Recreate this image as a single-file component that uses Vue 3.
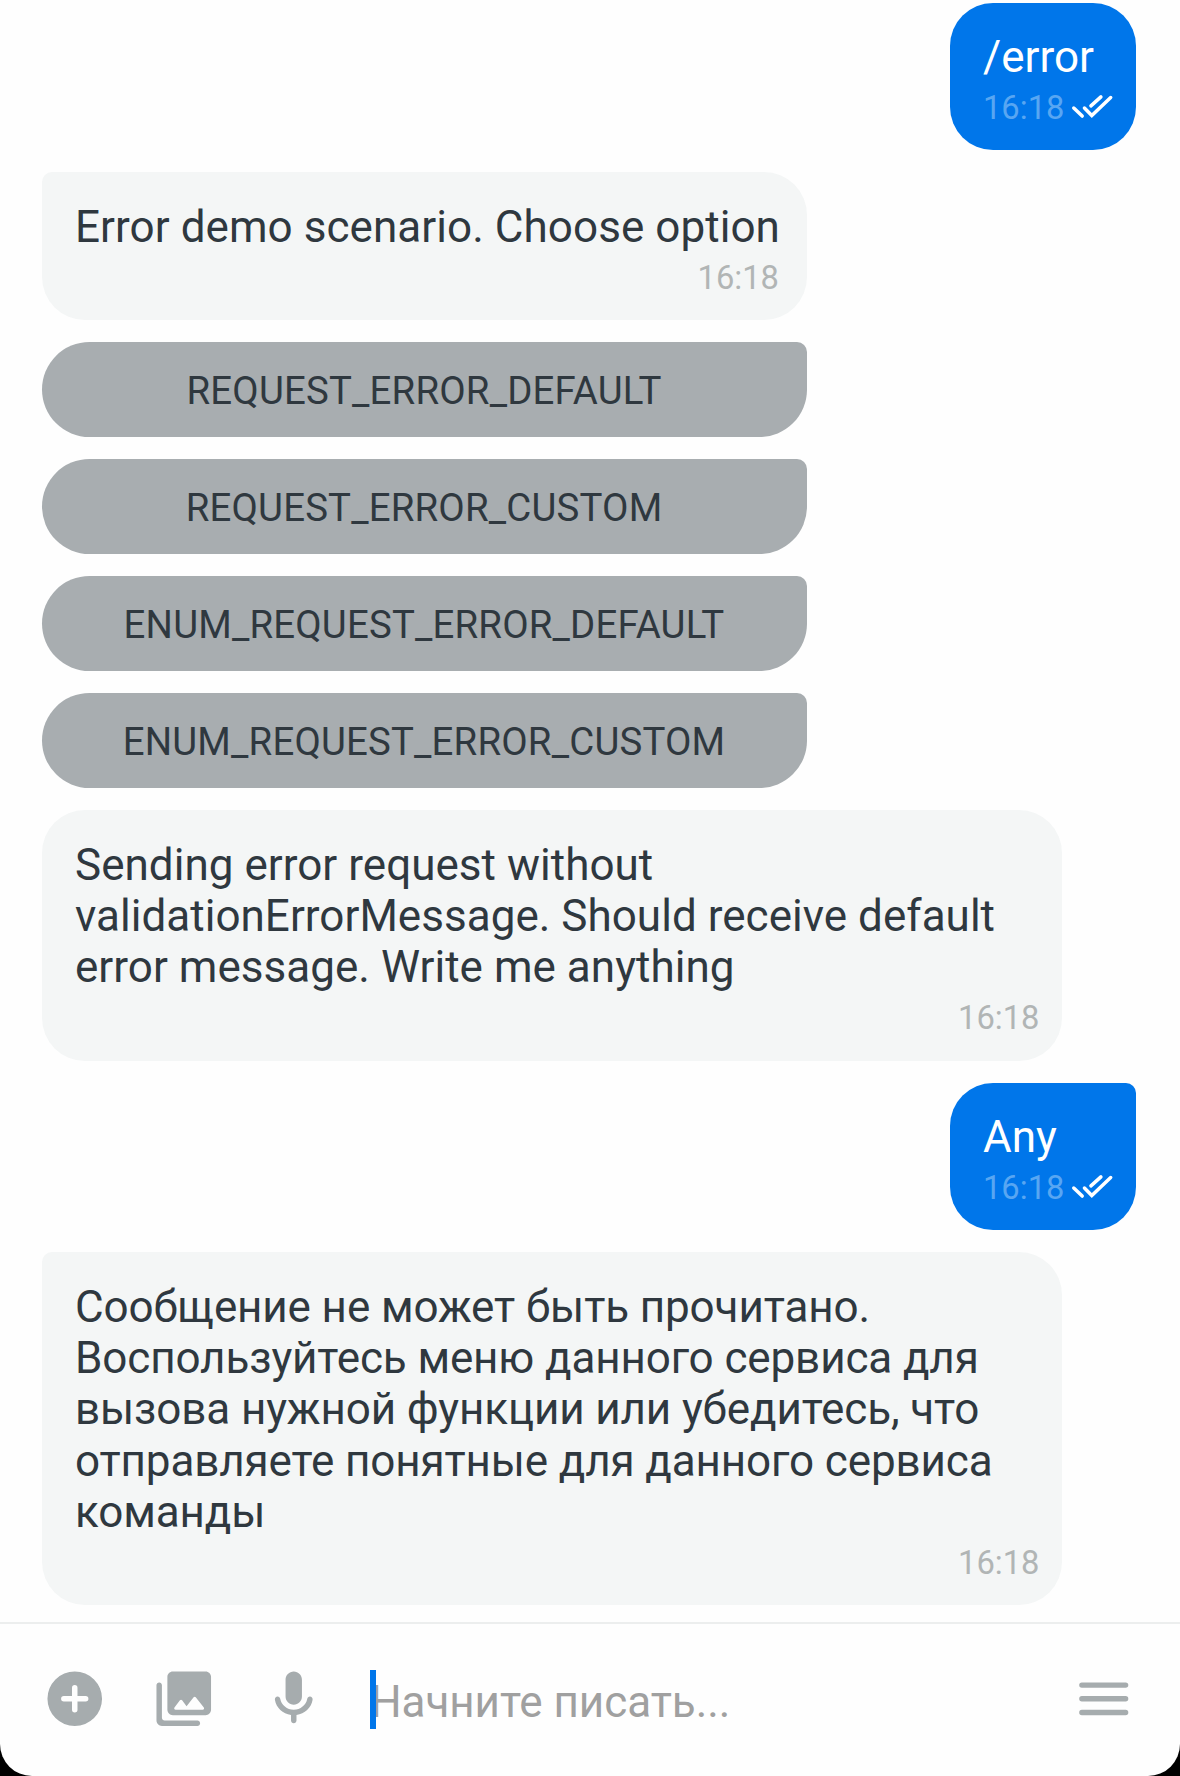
<script setup>
const items = [
  { kind: 'out', lines: ['/error'], shape: 'first' },
  { kind: 'in', lines: ['Error demo scenario. Choose option'], shape: 'fit tail' },
  { kind: 'button', label: 'REQUEST_ERROR_DEFAULT' },
  { kind: 'button', label: 'REQUEST_ERROR_CUSTOM' },
  { kind: 'button', label: 'ENUM_REQUEST_ERROR_DEFAULT' },
  { kind: 'button', label: 'ENUM_REQUEST_ERROR_CUSTOM' },
  {
    kind: 'in',
    lines: [
      'Sending error request without',
      'validationErrorMessage. Should receive default',
      'error message. Write me anything',
    ],
    shape: 'wide',
  },
  { kind: 'out', lines: ['Any'] },
  {
    kind: 'in',
    lines: [
      'Сообщение не может быть прочитано.',
      'Воспользуйтесь меню данного сервиса для',
      'вызова нужной функции или убедитесь, что',
      'отправляете понятные для данного сервиса',
      'команды',
    ],
    shape: 'wide tail cyrillic',
  },
]
const time = '16:18'
</script>

<template>
  <div class="screen">
    <div class="phone">
      <main class="feed">
        <template v-for="(item, i) in items" :key="i">
          <button v-if="item.kind === 'button'" class="option">{{ item.label }}</button>
          <div v-else class="bubble" :class="[item.kind, item.shape]">
            <p v-for="line in item.lines" :key="line" class="line">{{ line }}</p>
            <div class="meta">
              <span class="time">{{ time }}</span>
              <svg v-if="item.kind === 'out'" class="checks" viewBox="0 0 45 27">
                <path d="M3.9 15.1 12.6 23.4M14.9 15.1l7.6 7.7L42 4.2M21.6 12.9 31.9 3.6" />
              </svg>
            </div>
          </div>
        </template>
      </main>

      <footer class="composer">
        <svg class="icon" viewBox="0 0 24 24">
          <path d="M12 2a10 10 0 1 0 0 20 10 10 0 0 0 0-20zm4 11h-3v3a1 1 0 0 1-2 0v-3H8a1 1 0 0 1 0-2h3V8a1 1 0 0 1 2 0v3h3a1 1 0 0 1 0 2z" />
        </svg>
        <svg class="icon" viewBox="0 0 24 24">
          <path d="M22 16V4c0-1.100-.9-2-2-2H8c-1.100 0-2 .9-2 2v12c0 1.100.9 2 2 2h12c1.100 0 2-.9 2-2zm-10.600-3.470 1.630 2.180 2.580-3.220c.2-.25.58-.25.78 0l2.960 3.700c.26.33.03.81-.39.81H9c-.41 0-.65-.47-.4-.8l2-2.670c.2-.26.6-.26.8 0zM2 7v13c0 1.100.9 2 2 2h13c.55 0 1-.45 1-1s-.45-1-1-1H5c-.55 0-1-.45-1-1V7c0-.55-.45-1-1-1s-1 .45-1 1z" />
        </svg>
        <svg class="icon" viewBox="0 0 24 24">
          <path d="M12 14.200c1.660 0 3-1.340 3-3V5c0-1.660-1.340-3-3-3S9 3.340 9 5v6.200c0 1.660 1.340 3 3 3zm5.910-3c-.49 0-.9.360-.98.850C16.520 14.200 14.470 16 12 16s-4.520-1.800-4.930-3.950c-.08-.49-.49-.85-.98-.85-.61 0-1.090.54-1 1.140.49 3 2.890 5.160 5.910 5.600V20c0 .55.45 1 1 1s1-.45 1-1v-2.060c3.020-.44 5.420-2.600 5.910-5.600.1-.6-.39-1.140-1-1.140z" />
        </svg>
        <div class="field">
          <span class="placeholder">Начните писать...</span>
          <i class="caret"></i>
        </div>
        <svg class="icon" viewBox="0 0 24 24">
          <path d="M4 18h16a1 1 0 0 0 0-2H4a1 1 0 0 0 0 2zm0-5h16a1 1 0 0 0 0-2H4a1 1 0 0 0 0 2zM3 7a1 1 0 0 0 1 1h16a1 1 0 0 0 0-2H4a1 1 0 0 0-1 1z" />
        </svg>
      </footer>
    </div>
  </div>
</template>

<style>
body {
  margin: 0;
  background: #000;
}
</style>

<style scoped>
.screen {
  width: 1180px;
  height: 1776px;
  overflow: hidden;
  background: #000;
  font-family: Roboto, "Noto Sans", sans-serif;
}
.phone {
  display: flex;
  flex-direction: column;
  height: 1776px;
  background: #fefefe;
  border-radius: 0 0 32px 32px;
  overflow: hidden;
}
.feed {
  box-sizing: border-box;
  height: 1621.500px;
  flex: none;
  display: flex;
  flex-direction: column;
  align-items: flex-start;
  gap: 22px;
  padding: 2.700px 44px 0 42px;
}
.bubble {
  box-sizing: border-box;
  flex: none;
  border-radius: 43px;
  padding: 29.300px 22px 22.500px 33px;
}
.in {
  background: #f4f6f6;
  color: #2f383f;
}
.fit {
  width: 765px;
  padding-right: 28px;
}
.wide {
  width: 1019.500px;
}
.tail {
  border-top-left-radius: 10px;
}
.out {
  align-self: flex-end;
  width: 186px;
  background: #0076ea;
  color: #fff;
  border-top-right-radius: 10px;
}
.out.first {
  border-top-right-radius: 43px;
}
.line {
  margin: 0;
  font-size: 44px;
  line-height: 51.300px;
  letter-spacing: .03px;
  white-space: nowrap;
}
.fit .line {
  letter-spacing: .06px;
}
.cyrillic .line {
  letter-spacing: -.12px;
}
.meta {
  display: flex;
  justify-content: flex-end;
  align-items: flex-start;
  margin-top: 5.700px;
  height: 39px;
}
.out .meta {
  justify-content: flex-start;
}
.time {
  font-size: 32.700px;
  line-height: 39px;
  color: #b1b5b5;
}
.out .time {
  color: #58a6f2;
}
.checks {
  width: 45px;
  height: 27px;
  margin: 4.300px 0 0 6px;
  fill: none;
  stroke: #fff;
  stroke-width: 3.600;
  stroke-linecap: round;
}
.option {
  box-sizing: border-box;
  flex: none;
  width: 765px;
  height: 95px;
  margin: 0;
  padding: 3px 1px 0 0;
  border: 0;
  border-radius: 47.500px 10px 47.500px 47.500px;
  background: #a8adb0;
  color: #2f383f;
  font: 38.400px/44px Roboto, "Noto Sans", sans-serif;
  letter-spacing: .18px;
  text-align: center;
}
.composer {
  box-sizing: border-box;
  flex: 1;
  display: flex;
  align-items: center;
  gap: 43.900px;
  padding: 0 44px 1.500px 42px;
  border-top: 2px solid #eceeee;
}
.icon {
  flex: none;
  width: 65.500px;
  height: 65.500px;
  fill: #a6acae;
}
.field {
  position: relative;
  flex: 1;
  height: 59px;
}
.placeholder {
  display: block;
  padding-top: 6px;
  font-size: 44px;
  line-height: 52px;
  letter-spacing: -.05px;
  color: #a0a0a0;
}
.caret {
  position: absolute;
  left: 0;
  top: 0;
  width: 6px;
  height: 59px;
  background: #0076ea;
}
</style>
